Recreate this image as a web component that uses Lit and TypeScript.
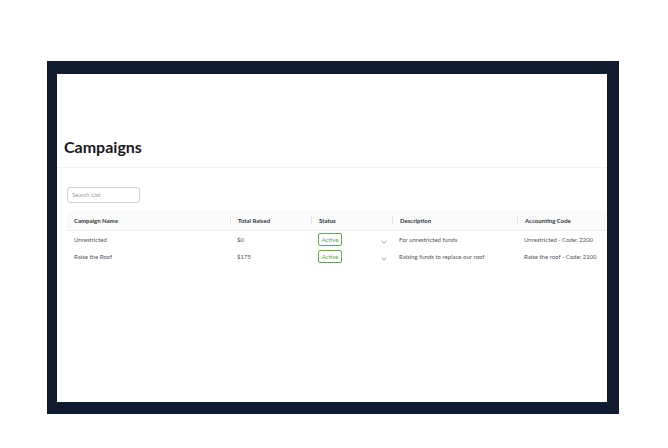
import { LitElement, html, css } from 'lit';
import { customElement } from 'lit/decorators.js';

const rows = [
  { name: 'Unrestricted', raised: '$0', desc: 'For unrestricted funds', code: 'Unrestricted - Code: 2200' },
  { name: 'Raise the Roof', raised: '$175', desc: 'Raising funds to replace our roof', code: 'Raise the roof - Code: 2100' }
];

@customElement('app-root')
export class AppRoot extends LitElement {
  static styles = css`
    :host {
      display: block;
      height: 448px;
      background: #fff;
      font-family: Lato, "Open Sans", sans-serif;
      overflow: hidden;
    }

    .frame {
      box-sizing: border-box;
      width: 572px;
      height: 353px;
      margin: 61px 0 0 47px;
      padding: 13px 12px 12px 10px;
      background: #101b2f;
      display: flex;
    }

    .screen {
      flex: 1;
      min-width: 0;
      background: #fff;
      display: flex;
      flex-direction: column;
    }

    h1 {
      margin: 0;
      padding: 62px 0 10px 7px;
      height: 21px;
      line-height: 21px;
      font-size: 16px;
      font-weight: 700;
      color: #16181d;
      border-bottom: 1px solid #f2f2f2;
    }

    .search {
      box-sizing: border-box;
      width: 73px;
      height: 16px;
      margin: 19px 0 8px 10px;
      padding-left: 4px;
      border: 1px solid #ccd0d8;
      border-radius: 3px;
      font-size: 6px;
      line-height: 14px;
      color: #9a9ea6;
    }

    .table {
      margin-left: 10px;
    }

    .row {
      display: grid;
      grid-template-columns: 163px 81px 81px 125px 1fr;
      align-items: center;
    }

    .head {
      height: 19px;
      background: #fafafa;
      border-bottom: 1px solid #eeeeee;
      font-size: 6px;
      font-weight: 700;
      color: #333841;
    }

    .head span {
      box-sizing: border-box;
      height: 7px;
      line-height: 7px;
      padding-left: 7px;
      border-left: 1px solid #e2e2e2;
    }

    .head span:first-child {
      border-left: none;
    }

    .body {
      height: 17px;
      font-size: 6px;
      color: #50545c;
    }

    .body > span,
    .body > div {
      padding-left: 7px;
    }

    .status {
      display: flex;
      align-items: center;
      justify-content: space-between;
      padding-right: 5px;
    }

    .badge {
      box-sizing: border-box;
      width: 24px;
      height: 13px;
      border: 1px solid #62a846;
      border-radius: 2px;
      font-size: 6px;
      line-height: 11px;
      text-align: center;
      color: #62a846;
    }

    svg {
      display: block;
      width: 6px;
      height: 4px;
      margin-top: 4px;
    }
  `;

  render() {
    return html`
      <div class="frame">
        <div class="screen">
          <h1>Campaigns</h1>
          <div class="search">Search List</div>
          <div class="table">
            <div class="row head">
              <span>Campaign Name</span>
              <span>Total Raised</span>
              <span>Status</span>
              <span>Description</span>
              <span>Accounting Code</span>
            </div>
            ${rows.map(
              (r) => html`
                <div class="row body">
                  <span>${r.name}</span>
                  <span>${r.raised}</span>
                  <div class="status">
                    <div class="badge">Active</div>
                    <svg viewBox="0 0 6 4" fill="none" stroke="#70747c" stroke-width="0.7">
                      <path d="M0.5 0.8 L3 3.2 L5.5 0.8" />
                    </svg>
                  </div>
                  <span>${r.desc}</span>
                  <span>${r.code}</span>
                </div>
              `
            )}
          </div>
        </div>
      </div>
    `;
  }
}
